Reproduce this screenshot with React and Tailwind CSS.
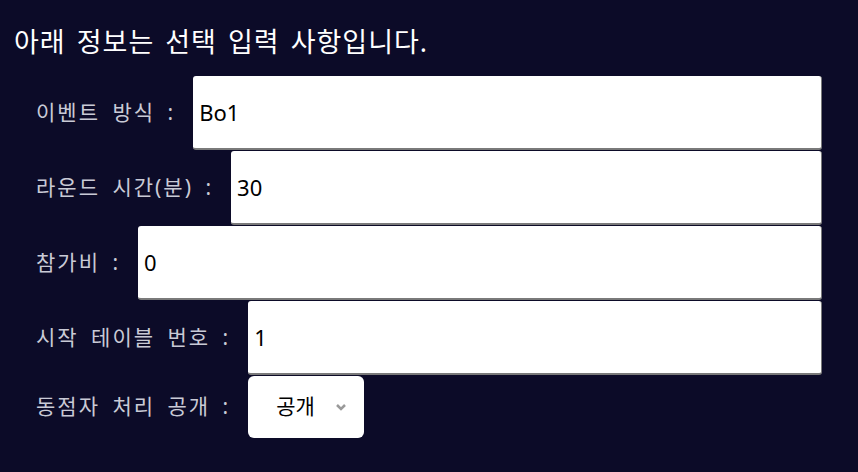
import React from "react";

function Row({ label, value }) {
  return (
    <div className="flex items-center">
      <span className="pl-[36px] pr-[18px] text-[21px] tracking-[2px] [word-spacing:5px] text-[#c9cad6] whitespace-nowrap">{label}</span>
      <div className="flex-1 h-[74px] bg-white rounded-[3px] border-b-2 border-r border-[#7a7a7a] flex items-center pl-[6px] text-[22px] text-black">
        {value}
      </div>
    </div>
  );
}

export default function App() {
  return (
    <div className="w-[858px] h-[472px] bg-[#0c0b28] pr-[36px] font-['Noto_Sans','Noto_Sans_CJK_KR',sans-serif] overflow-hidden">
      <div className="pt-[22px] pl-[14px] text-[27px] leading-[40px] [word-spacing:3px] tracking-[1px] text-white">아래 정보는 선택 입력 사항입니다.</div>
      <div className="mt-[14px] flex flex-col gap-[1px]">
        <Row label="이벤트 방식 :" value="Bo1" />
        <Row label="라운드 시간(분) :" value="30" />
        <Row label="참가비 :" value="0" />
        <Row label="시작 테이블 번호 :" value="1" />
        <div className="flex items-center">
          <span className="pl-[36px] pr-[18px] text-[21px] tracking-[2px] [word-spacing:5px] text-[#c9cad6] whitespace-nowrap">동점자 처리 공개 :</span>
          <div className="w-[116px] h-[62px] bg-white rounded-[6px] flex items-center pl-[28px] text-[21px] text-black">
            <span>공개</span>
            <svg className="ml-[20px]" width="12" height="8" viewBox="0 0 12 8">
              <path d="M2 2 L6 6 L10 2" stroke="#9a9a9a" strokeWidth="2.5" fill="none" />
            </svg>
          </div>
        </div>
      </div>
    </div>
  );
}
